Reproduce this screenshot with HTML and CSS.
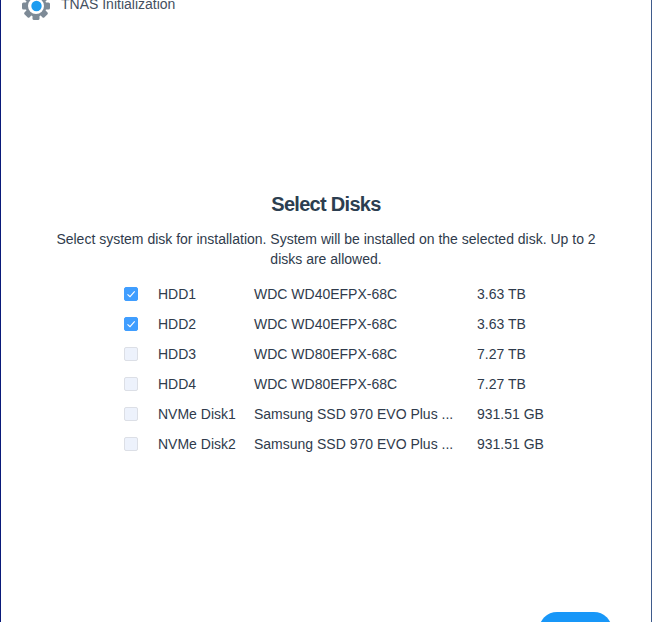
FILE: index.html
```html
<!DOCTYPE html>
<html lang="en">
<head>
<meta charset="utf-8">
<title>TNAS Initialization</title>
<link rel="stylesheet" href="styles.css">
</head>
<body>
<div class="window">
  <header class="titlebar">
    <svg class="gear" viewBox="0 0 28 28" aria-hidden="true">
      <g fill="#7d8a96">
        <circle cx="14" cy="14" r="10.500"/>
        <rect x="10.500" y="0" width="7" height="28" rx="1.500"/>
        <rect x="10.500" y="0" width="7" height="28" rx="1.500" transform="rotate(45 14 14)"/>
        <rect x="10.500" y="0" width="7" height="28" rx="1.500" transform="rotate(90 14 14)"/>
        <rect x="10.500" y="0" width="7" height="28" rx="1.500" transform="rotate(135 14 14)"/>
      </g>
      <circle cx="14" cy="14" r="8" fill="#fff"/>
      <circle cx="14.500" cy="14" r="5.200" fill="#1c9cf0"/>
    </svg>
    <span class="app-name">TNAS Initialization</span>
  </header>
  <main class="content">
    <h1 class="heading">Select Disks</h1>
    <p class="intro">Select system disk for installation. System will be installed on the selected disk. Up to 2 disks are allowed.</p>
    <ul class="disks">
      <li class="disk"><span class="check checked"><svg viewBox="0 0 12 12"><path d="M2.500 6.300 5 8.600l4.700-5.300" /></svg></span><span class="name">HDD1</span><span class="model">WDC WD40EFPX-68C</span><span class="size">3.63 TB</span></li>
      <li class="disk"><span class="check checked"><svg viewBox="0 0 12 12"><path d="M2.500 6.300 5 8.600l4.700-5.300" /></svg></span><span class="name">HDD2</span><span class="model">WDC WD40EFPX-68C</span><span class="size">3.63 TB</span></li>
      <li class="disk"><span class="check"></span><span class="name">HDD3</span><span class="model">WDC WD80EFPX-68C</span><span class="size">7.27 TB</span></li>
      <li class="disk"><span class="check"></span><span class="name">HDD4</span><span class="model">WDC WD80EFPX-68C</span><span class="size">7.27 TB</span></li>
      <li class="disk"><span class="check"></span><span class="name">NVMe Disk1</span><span class="model">Samsung SSD 970 EVO Plus ...</span><span class="size">931.51 GB</span></li>
      <li class="disk"><span class="check"></span><span class="name">NVMe Disk2</span><span class="model">Samsung SSD 970 EVO Plus ...</span><span class="size">931.51 GB</span></li>
    </ul>
  </main>
  <footer class="actions"><button class="next" type="button"></button></footer>
</div>
</body>
</html>
```
FILE: styles.css
```css
html, body {
  margin: 0;
  padding: 0;
  height: 622px;
  overflow: hidden;
  background: #fff;
}
.window {
  box-sizing: border-box;
  height: 622px;
  width: 652px;
  display: flex;
  flex-direction: column;
  overflow: hidden;
  border-left: 1px solid #0a1a7a;
  border-right: 1px solid #3f5b8c;
  font-family: "Liberation Sans", Arial, sans-serif;
  color: #2f3b4c;
}
.titlebar {
  display: flex;
  align-items: flex-start;
  height: 32px;
  margin-top: -8px;
  padding-left: 21px;
  flex: none;
}
.gear {
  width: 28px;
  height: 28px;
  flex: none;
}
.app-name {
  margin-left: 11px;
  margin-top: 2px;
  font-size: 14px;
  line-height: 20px;
  color: #44505f;
}
.content {
  flex: 1;
  padding-top: 168px;
}
.heading {
  margin: 0;
  text-align: center;
  font-size: 20px;
  line-height: 24px;
  font-weight: 700;
  letter-spacing: -0.7px;
  color: #2c3e50;
}
.intro {
  margin: 13px 40px 0;
  padding: 0 10px;
  text-align: center;
  font-size: 14px;
  line-height: 20px;
}
.disks {
  list-style: none;
  margin: 10px 0 0;
  padding: 0 0 0 123px;
}
.disk {
  display: flex;
  align-items: center;
  height: 30px;
  font-size: 14px;
}
.check {
  box-sizing: border-box;
  width: 14px;
  height: 14px;
  border-radius: 2px;
  border: 1px solid #dcdfe6;
  background: #edf2fc;
  flex: none;
}
.check.checked {
  background: #409eff;
  border-color: #409eff;
}
.check svg {
  display: block;
  width: 12px;
  height: 12px;
  fill: none;
  stroke: #fff;
  stroke-width: 1.100;
}
.name {
  margin-left: 20px;
  width: 96px;
  flex: none;
}
.model {
  width: 223px;
  flex: none;
}
.size {
  flex: none;
}
.actions {
  display: flex;
  justify-content: flex-end;
  height: 10px;
  flex: none;
  padding-right: 39px;
}
.next {
  width: 73px;
  height: 36px;
  border: 0;
  border-radius: 18px;
  background: #1897f8;
  padding: 0;
}
```
